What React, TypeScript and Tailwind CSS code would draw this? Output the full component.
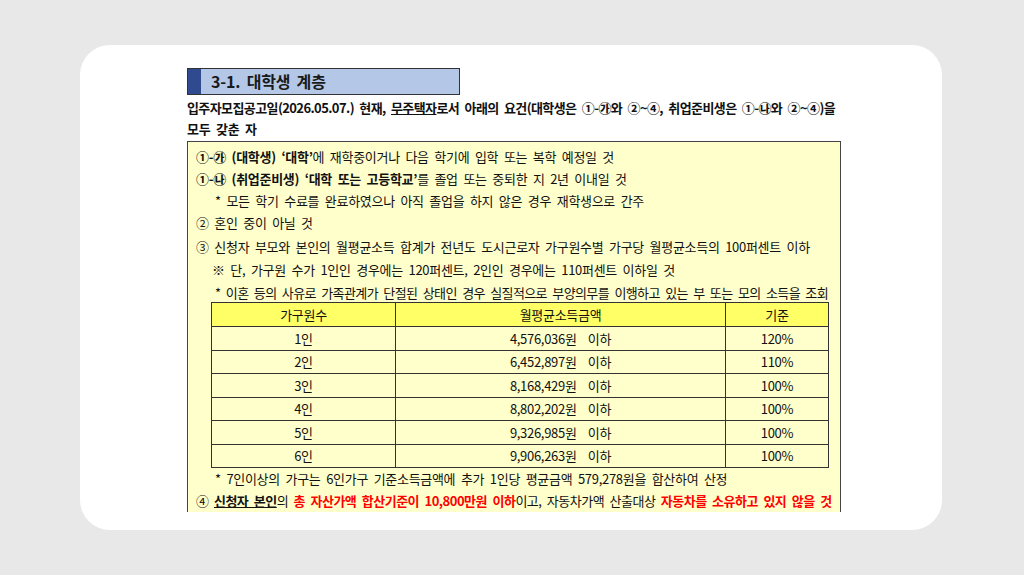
import React from "react";

const F = { fontFamily: '"Noto Sans CJK KR", "Noto Sans", sans-serif', wordSpacing: "3px" };

const rows = [
  ["1인", "4,576,036원  이하", "120%"],
  ["2인", "6,452,897원  이하", "110%"],
  ["3인", "8,168,429원  이하", "100%"],
  ["4인", "8,802,202원  이하", "100%"],
  ["5인", "9,326,985원  이하", "100%"],
  ["6인", "9,906,263원  이하", "100%"],
];

export default function App() {
  return (
    <div className="w-[1024px] h-[575px] bg-[#e8e8e8] pt-[45px] pl-[80px]" style={F}>
      <div className="w-[862px] h-[485px] bg-white rounded-[30px] overflow-hidden pl-[107px] pt-[23px]">
        <div className="w-[654px] h-[444px] overflow-hidden text-[13px] text-[#111] tracking-[-0.3px] leading-[21px]">
          <div className="flex w-[273px] h-[27px] border border-[#333] bg-[#b4c7e7]">
            <div className="w-[13px] bg-[#2f4a8f]" />
            <div className="pl-[10px] text-[16px] font-semibold leading-[25px] tracking-[-0.2px] text-[#1a1a1a]">3-1. 대학생 계층</div>
          </div>
          <div className="mt-[2px] font-bold whitespace-nowrap tracking-[-0.6px]">
            입주자모집공고일(2026.05.07.) 현재, <span className="underline">무주택자</span>로서 아래의 요건(대학생은 ①-㉮와 ②~④, 취업준비생은 ①-㉯와 ②~④)을
          </div>
          <div className="font-bold">모두 갖춘 자</div>
          <div className="mt-[2px] border border-[#444] bg-[#ffffcc] pl-[8px] pt-[4px] h-[420px] whitespace-nowrap">
            <div className="h-[22px]"><b>①-㉮ (대학생) ‘대학’</b>에 재학중이거나 다음 학기에 입학 또는 복학 예정일 것</div>
            <div className="h-[22px]"><b>①-㉯ (취업준비생) ‘대학 또는 고등학교’</b>를 졸업 또는 중퇴한 지 2년 이내일 것</div>
            <div className="h-[22px] pl-[19px]">* 모든 학기 수료를 완료하였으나 아직 졸업을 하지 않은 경우 재학생으로 간주</div>
            <div className="h-[24px]">② 혼인 중이 아닐 것</div>
            <div className="h-[23px]">③ 신청자 부모와 본인의 월평균소득 합계가 전년도 도시근로자 가구원수별 가구당 월평균소득의 100퍼센트 이하</div>
            <div className="h-[23px] pl-[16px]">※ 단, 가구원 수가 1인인 경우에는 120퍼센트, 2인인 경우에는 110퍼센트 이하일 것</div>
            <div className="h-[20px] pl-[19px] tracking-[-0.6px]">* 이혼 등의 사유로 가족관계가 단절된 상태인 경우 실질적으로 부양의무를 이행하고 있는 부 또는 모의 소득을 조회</div>
            <table className="ml-[15px] w-[618px] border-collapse border border-[#333] text-center">
              <thead>
                <tr className="bg-[#ffff66] h-[24px]">
                  <td className="border border-[#333] w-[184px]">가구원수</td>
                  <td className="border border-[#333] w-[330px]">월평균소득금액</td>
                  <td className="border border-[#333]">기준</td>
                </tr>
              </thead>
              <tbody>
                {rows.map((r) => (
                  <tr key={r[0]} className="h-[23.5px]">
                    <td className="border border-[#333]">{r[0]}</td>
                    <td className="border border-[#333] whitespace-pre">{r[1]}</td>
                    <td className="border border-[#333]">{r[2]}</td>
                  </tr>
                ))}
              </tbody>
            </table>
            <div className="h-[22px] pl-[19px]">* 7인이상의 가구는 6인가구 기준소득금액에 추가 1인당 평균금액 579,278원을 합산하여 산정</div>
            <div className="h-[22px] tracking-[-0.5px]">
              ④ <b className="underline">신청자 본인</b>의 <b className="text-[#ff0000]">총 자산가액 합산기준이 10,800만원 이하</b>이고, 자동차가액 산출대상 <b className="text-[#ff0000]">자동차를 소유하고 있지 않을 것</b>
            </div>
          </div>
        </div>
      </div>
    </div>
  );
}
